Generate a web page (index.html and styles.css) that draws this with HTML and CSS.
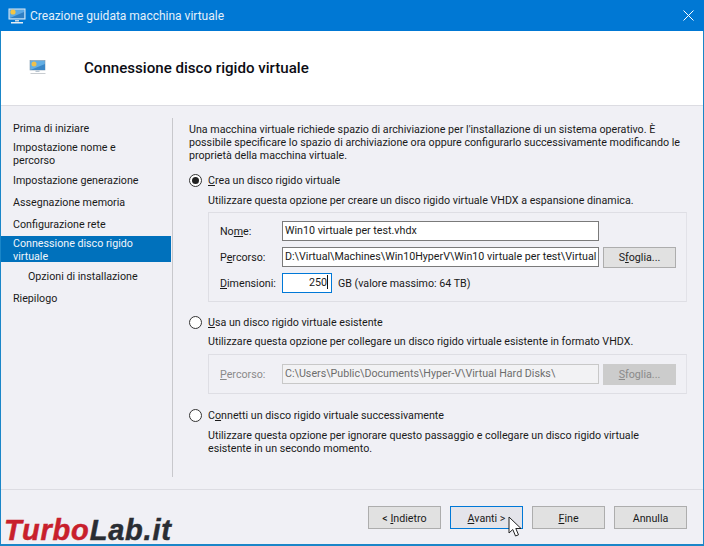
FILE: index.html
```html
<!DOCTYPE html>
<html lang="it">
<head>
<meta charset="utf-8">
<title>Creazione guidata macchina virtuale</title>
<link rel="stylesheet" href="styles.css">
</head>
<body>
<div class="window">
  <div class="titlebar">
    <svg class="title-icon" width="18" height="18" viewBox="0 0 18 18"><rect x="1" y="2" width="16" height="10" fill="#5aa9e6" stroke="#dfe9f2" stroke-width="1"/><path d="M2 11L16 5V11Z" fill="#2f7fc4"/><circle cx="5" cy="5" r="2.6" fill="#f4c542"/><rect x="7" y="13" width="4" height="1.5" fill="#c9d6e2"/><rect x="3" y="15" width="12" height="1.5" fill="#e6edf3"/></svg>
    <span class="title-text">Creazione guidata macchina virtuale</span>
    <svg class="close" width="11" height="11" viewBox="0 0 11 11"><path d="M.5.5L10.500 10.500M10.500.5L.5 10.500" stroke="#fff" stroke-width="1" fill="none"/></svg>
  </div>
  <div class="header">
    <svg class="header-icon" width="18" height="16" viewBox="0 0 18 16"><rect x="1" y="0.5" width="15" height="9.5" fill="#62aee4" stroke="#7d97ad" stroke-width=".6"/><path d="M1.500 10L16 4V10Z" fill="#3a86c6"/><circle cx="5" cy="4" r="2.500" fill="#eec04c"/><rect x="6.500" y="10.500" width="4" height="1.500" fill="#b9c6d2"/><rect x="1.500" y="13" width="15" height="1" fill="#c8ccd0"/></svg>
    <h1 class="header-title">Connessione disco rigido virtuale</h1>
  </div>
  <div class="body">
    <nav class="steps">
      <div class="step s1">Prima di iniziare</div>
      <div class="step s2">Impostazione nome e<br>percorso</div>
      <div class="step s3">Impostazione generazione</div>
      <div class="step s3b">Assegnazione memoria</div>
      <div class="step s3b">Configurazione rete</div>
      <div class="step selected">Connessione disco rigido<br>virtuale</div>
      <div class="step sub">Opzioni di installazione</div>
      <div class="step s3b">Riepilogo</div>
    </nav>
    <main class="content">
      <p class="intro">Una macchina virtuale richiede spazio di archiviazione per l'installazione di un sistema operativo. È<br>possibile specificare lo spazio di archiviazione ora oppure configurarlo successivamente modificando le<br>proprietà della macchina virtuale.</p>

      <div class="radio-row first"><span class="radio checked"></span><span><u>C</u>rea un disco rigido virtuale</span></div>
      <p class="desc">Utilizzare questa opzione per creare un disco rigido virtuale VHDX a espansione dinamica.</p>
      <div class="group g1">
        <div class="row">
          <label class="lbl">No<u>m</u>e:</label>
          <div class="input wide">Win10 virtuale per test.vhdx</div>
        </div>
        <div class="row">
          <label class="lbl">P<u>e</u>rcorso:</label>
          <div class="input wide">D:\Virtual\Machines\Win10HyperV\Win10 virtuale per test\Virtual</div>
          <div class="btn browse">S<u>f</u>oglia...</div>
        </div>
        <div class="row">
          <label class="lbl"><u>D</u>imensioni:</label>
          <div class="input size">250<span class="caret"></span></div>
          <span class="unit">GB (valore massimo: 64 TB)</span>
        </div>
      </div>

      <div class="radio-row second"><span class="radio"></span><span><u>U</u>sa un disco rigido virtuale esistente</span></div>
      <p class="desc d2">Utilizzare questa opzione per collegare un disco rigido virtuale esistente in formato VHDX.</p>
      <div class="group g2">
        <div class="row">
          <label class="lbl off"><u>P</u>ercorso:</label>
          <div class="input wide disabled">C:\Users\Public\Documents\Hyper-V\Virtual Hard Disks\</div>
          <div class="btn browse btn-off"><u>S</u>foglia...</div>
        </div>
      </div>

      <div class="radio-row third"><span class="radio"></span><span>C<u>o</u>nnetti un disco rigido virtuale successivamente</span></div>
      <p class="desc d3">Utilizzare questa opzione per ignorare questo passaggio e collegare un disco rigido virtuale<br>esistente in un secondo momento.</p>
    </main>
  </div>
  <div class="footer">
    <div class="btn foot">&lt; <u>I</u>ndietro</div>
    <div class="btn foot default"><u>A</u>vanti &gt;</div>
    <div class="btn foot"><u>F</u>ine</div>
    <div class="btn foot">Annulla</div>
  </div>
  <div class="watermark"><span class="wm-turbo">Turbo</span><span class="wm-lab">Lab.it</span></div>
  <svg class="cursor" width="15" height="23" viewBox="0 0 15 23"><path d="M1 1V17L4.800 13.500L7.500 20L10.500 18.800L7.800 12.500H13Z" fill="#fff" stroke="#222" stroke-width="1" stroke-linejoin="round"/></svg>
</div>
</body>
</html>
```

FILE: styles.css
```css
* { box-sizing: border-box; }
html, body { margin: 0; padding: 0; }
body { width: 704px; height: 546px; overflow: hidden; font-family: Roboto, "Noto Sans", sans-serif; font-size: 10.7px; color: #1a1a1a; }
p, h1 { margin: 0; }
u { text-underline-offset: 1px; }

.window { position: relative; width: 704px; height: 546px; display: flex; flex-direction: column; background: #f0f0f5; border: solid #1a86c8; border-width: 0 1px 2px 1px; }

.titlebar { flex: none; height: 31px; margin: 0 -1px; background: #0078d4; color: #e4f0fa; display: flex; align-items: center; padding-left: 8px; font-size: 12px; }
.title-icon { flex: none; margin-right: 4px; }
.title-text { flex: 1; }
.close { flex: none; margin-right: 10px; }

.header { flex: none; height: 75px; background: #fff; border-bottom: 1px solid #dcdce2; display: flex; align-items: center; padding: 0 0 0 28px; }
.header-icon { flex: none; margin-right: 37px; }
.header-title { font-size: 15.1px; font-weight: 500; color: #0c0c14; }

.body { flex: 1; display: flex; min-height: 0; padding-top: 12px; border-bottom: 1px solid #dcdce2; }

.steps { flex: none; width: 172px; height: 359px; border-right: 1px solid #c8c8cc; padding-top: 4px; line-height: 13px; }
.step { padding-left: 12px; }
.s2 { margin-top: 6px; }
.s3 { margin-top: 7px; }
.s3b { margin-top: 9px; }
.selected { margin-top: 5px; padding-top: 1px; height: 26px; background: #0071bc; color: #f0f6fb; width: 170px; }
.sub { padding-left: 27px; margin-top: 8px; }

.content { flex: 1; padding: 5px 0 0 16px; line-height: 13px; min-width: 0; }
.intro { white-space: nowrap; }

.radio-row { display: flex; align-items: center; height: 14px; gap: 6px; }
.first { margin-top: 11px; }
.second { margin-top: 13px; }
.third { margin-top: 14px; }
.radio { flex: none; width: 13px; height: 13px; border: 1px solid #333; border-radius: 50%; background: #fff; display: flex; align-items: center; justify-content: center; }
.checked::after { content: ""; width: 7px; height: 7px; border-radius: 50%; background: #222; }

.desc { margin: 7px 0 0 19px; white-space: nowrap; }
.d2 { margin-top: 6px; }
.d3 { margin-top: 7px; }

.group { width: 479px; margin: 5px 0 0 19px; border: 1px solid #dedee4; border-right-color: #e2e2e8; padding: 8px 0 0 11px; }
.g1 { height: 90px; }
.g2 { height: 40px; margin-top: 6px; padding-top: 9px; }

.row { display: flex; align-items: center; height: 20px; margin-bottom: 6px; }
.lbl { flex: none; width: 62px; }
.off { color: #8a8a8a; }
.input { flex: none; height: 20px; border: 1px solid #7a7a7a; background: #fff; padding: 0 2px; line-height: 18px; white-space: nowrap; overflow: hidden; }
.wide { width: 317px; }
.size { width: 50px; border-color: #0078d7; text-align: right; padding-right: 3px; }
.caret { display: inline-block; width: 1px; height: 14px; background: #111; vertical-align: -3px; }
.unit { margin-left: 6px; }
.disabled { background: #f2f2f4; border-color: #c8c8c8; color: #6d6d6d; }

.btn { flex: none; background: #e1e1e1; border: 1px solid #adadad; text-align: center; white-space: nowrap; }
.browse { width: 73px; height: 21px; margin-left: 4px; line-height: 20px; }
.btn-off { background: #ccc; border-color: #ccc; color: #8a8a8a; }

.footer { flex: none; height: 54px; display: flex; justify-content: flex-end; gap: 9px; padding: 16px 16px 0 0; }
.foot { width: 73px; height: 23px; line-height: 23px; }
.default { border-color: #0078d7; background: #e4e4ea; }

.watermark { position: absolute; left: 3px; bottom: -1px; font-family: "Liberation Sans", sans-serif; font-style: italic; font-weight: 700; font-size: 29px; line-height: 30px; letter-spacing: .8px; white-space: nowrap; -webkit-text-stroke: .5px currentColor; }
.wm-turbo { color: #c8202c; }
.wm-lab { color: #2a2d33; }

.cursor { position: absolute; left: 507px; top: 516px; }
```
